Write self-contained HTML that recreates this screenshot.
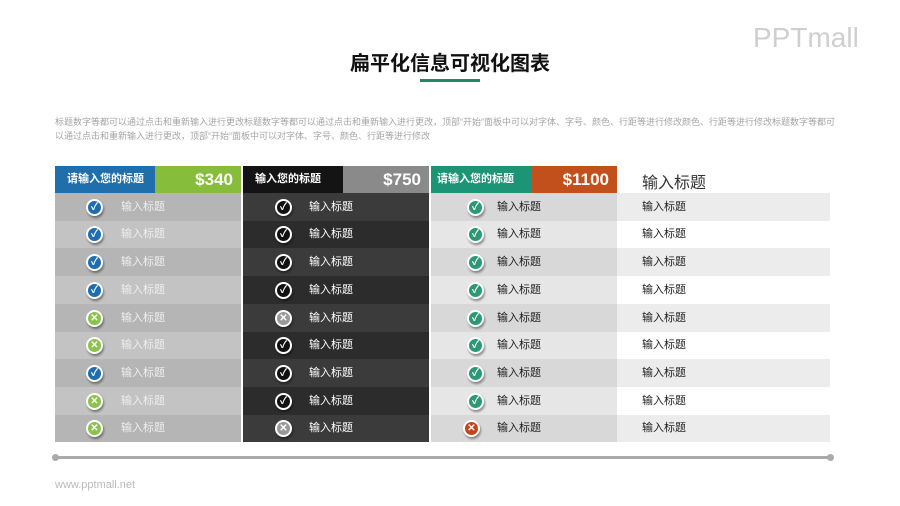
<!DOCTYPE html>
<html><head><meta charset="utf-8"><style>
*{margin:0;padding:0;box-sizing:border-box}
body{width:900px;height:506px;background:#fff;font-family:"Liberation Sans","Noto Sans CJK SC",sans-serif;position:relative;overflow:hidden}
.a{position:absolute}
.title{left:0;width:900px;top:47px;text-align:center;font-size:20px;font-weight:bold;color:#111}
.ul{left:420px;top:79px;width:60px;height:3px;background:#1f8a64}
.desc{left:55px;top:115px;width:780px;font-size:9px;line-height:14px;color:#a5a5a5}
.logo{left:753px;top:22px;font-size:28px;color:#cfcfcf;letter-spacing:0px}
.h{top:166px;height:27px;color:#fff;font-size:11px;line-height:27px;font-weight:bold;padding-left:12px}
.p{top:166px;height:27px;color:#fff;font-size:17px;line-height:27px;font-weight:bold;text-align:right;padding-right:8px}
.row{position:absolute;font-size:11px}
.ic{position:absolute;width:17px;height:17px;border-radius:50%;border:2px solid #fff;box-shadow:1px 2px 2px rgba(0,0,0,.4);color:#fff;font-size:10px;line-height:13px;text-align:center;font-weight:bold}
.foot{left:55px;top:479px;font-size:11px;color:#bbb}
</style></head><body>
<div class="a logo">PPTmall</div>
<div class="a title">扁平化信息可视化图表</div>
<div class="a ul"></div>
<div class="a desc">标题数字等都可以通过点击和重新输入进行更改标题数字等都可以通过点击和重新输入进行更改，顶部“开始”面板中可以对字体、字号、颜色、行距等进行修改颜色、行距等进行修改标题数字等都可以通过点击和重新输入进行更改，顶部“开始”面板中可以对字体、字号、颜色、行距等进行修改</div>
<div class="a h" style="left:55px;width:100px;background:#1f6fad">请输入您的标题</div>
<div class="a p" style="left:155px;width:86px;background:#86bd3a">$340</div>
<div class="a h" style="left:243px;width:100px;background:#141414">输入您的标题</div>
<div class="a p" style="left:343px;width:86px;background:#8a8a8a">$750</div>
<div class="a h" style="left:431px;width:100px;background:#1c9576;padding-left:6px">请输入您的标题</div>
<div class="a p" style="left:531px;width:86px;background:#c2501c">$1100</div>
<div class="a" style="left:642px;top:169px;font-size:16px;color:#333">输入标题</div>
<div id="rows"></div>
<script>
var c1="ccccxxcxx",c2="ccccXcccX";
var h='';
function ic(x,t,bg,hh){var g=(t=='x'||t=='X')?'✕':'✓';return '<div class="ic" style="top:'+Math.round((hh-17)/2)+'px;left:'+x+'px;background:'+bg+'">'+g+'</div>'}
for(var i=0;i<9;i++){var y=Math.round(193+i*27.7),y2=Math.round(193+(i+1)*27.7),hh=y2-y,e=i%2==0;
var st='top:'+y+'px;height:'+hh+'px;line-height:'+hh+'px;';
h+='<div class="row" style="left:55px;'+st+'width:186px;background:'+(e?'#b5b5b5':'#c3c3c3')+';color:#eee">'+(c1[i]=='c'?ic(31,'c','#1e6db0',hh):ic(31,'x','#8bc34a',hh))+'<span style="position:absolute;left:66px">输入标题</span></div>';
h+='<div class="row" style="left:243px;'+st+'width:186px;background:'+(e?'#3b3b3b':'#2c2c2c')+';color:#fff">'+(c2[i]=='c'?ic(32,'c','#111',hh):ic(32,'X','#999',hh))+'<span style="position:absolute;left:66px">输入标题</span></div>';
h+='<div class="row" style="left:431px;'+st+'width:186px;background:'+(e?'#d8d8d8':'#e6e6e6')+';color:#222">'+(i<8?ic(36,'c','#2a9a76',hh):ic(32,'x','#c2451c',hh))+'<span style="position:absolute;left:66px">输入标题</span></div>';
h+='<div class="row" style="left:617px;'+st+'width:213px;background:'+(e?'#ececec':'#fff')+';color:#222"><span style="position:absolute;left:25px">输入标题</span></div>';
}
document.getElementById('rows').innerHTML=h;
</script>
<div class="a" style="left:55px;top:456px;width:777px;height:3px;background:#aaa;border-radius:2px"></div>
<div class="a" style="left:52px;top:454px;width:7px;height:7px;border-radius:50%;background:#aaa"></div>
<div class="a" style="left:827px;top:454px;width:7px;height:7px;border-radius:50%;background:#aaa"></div>
<div class="a foot">www.pptmall.net</div>
</body></html>
